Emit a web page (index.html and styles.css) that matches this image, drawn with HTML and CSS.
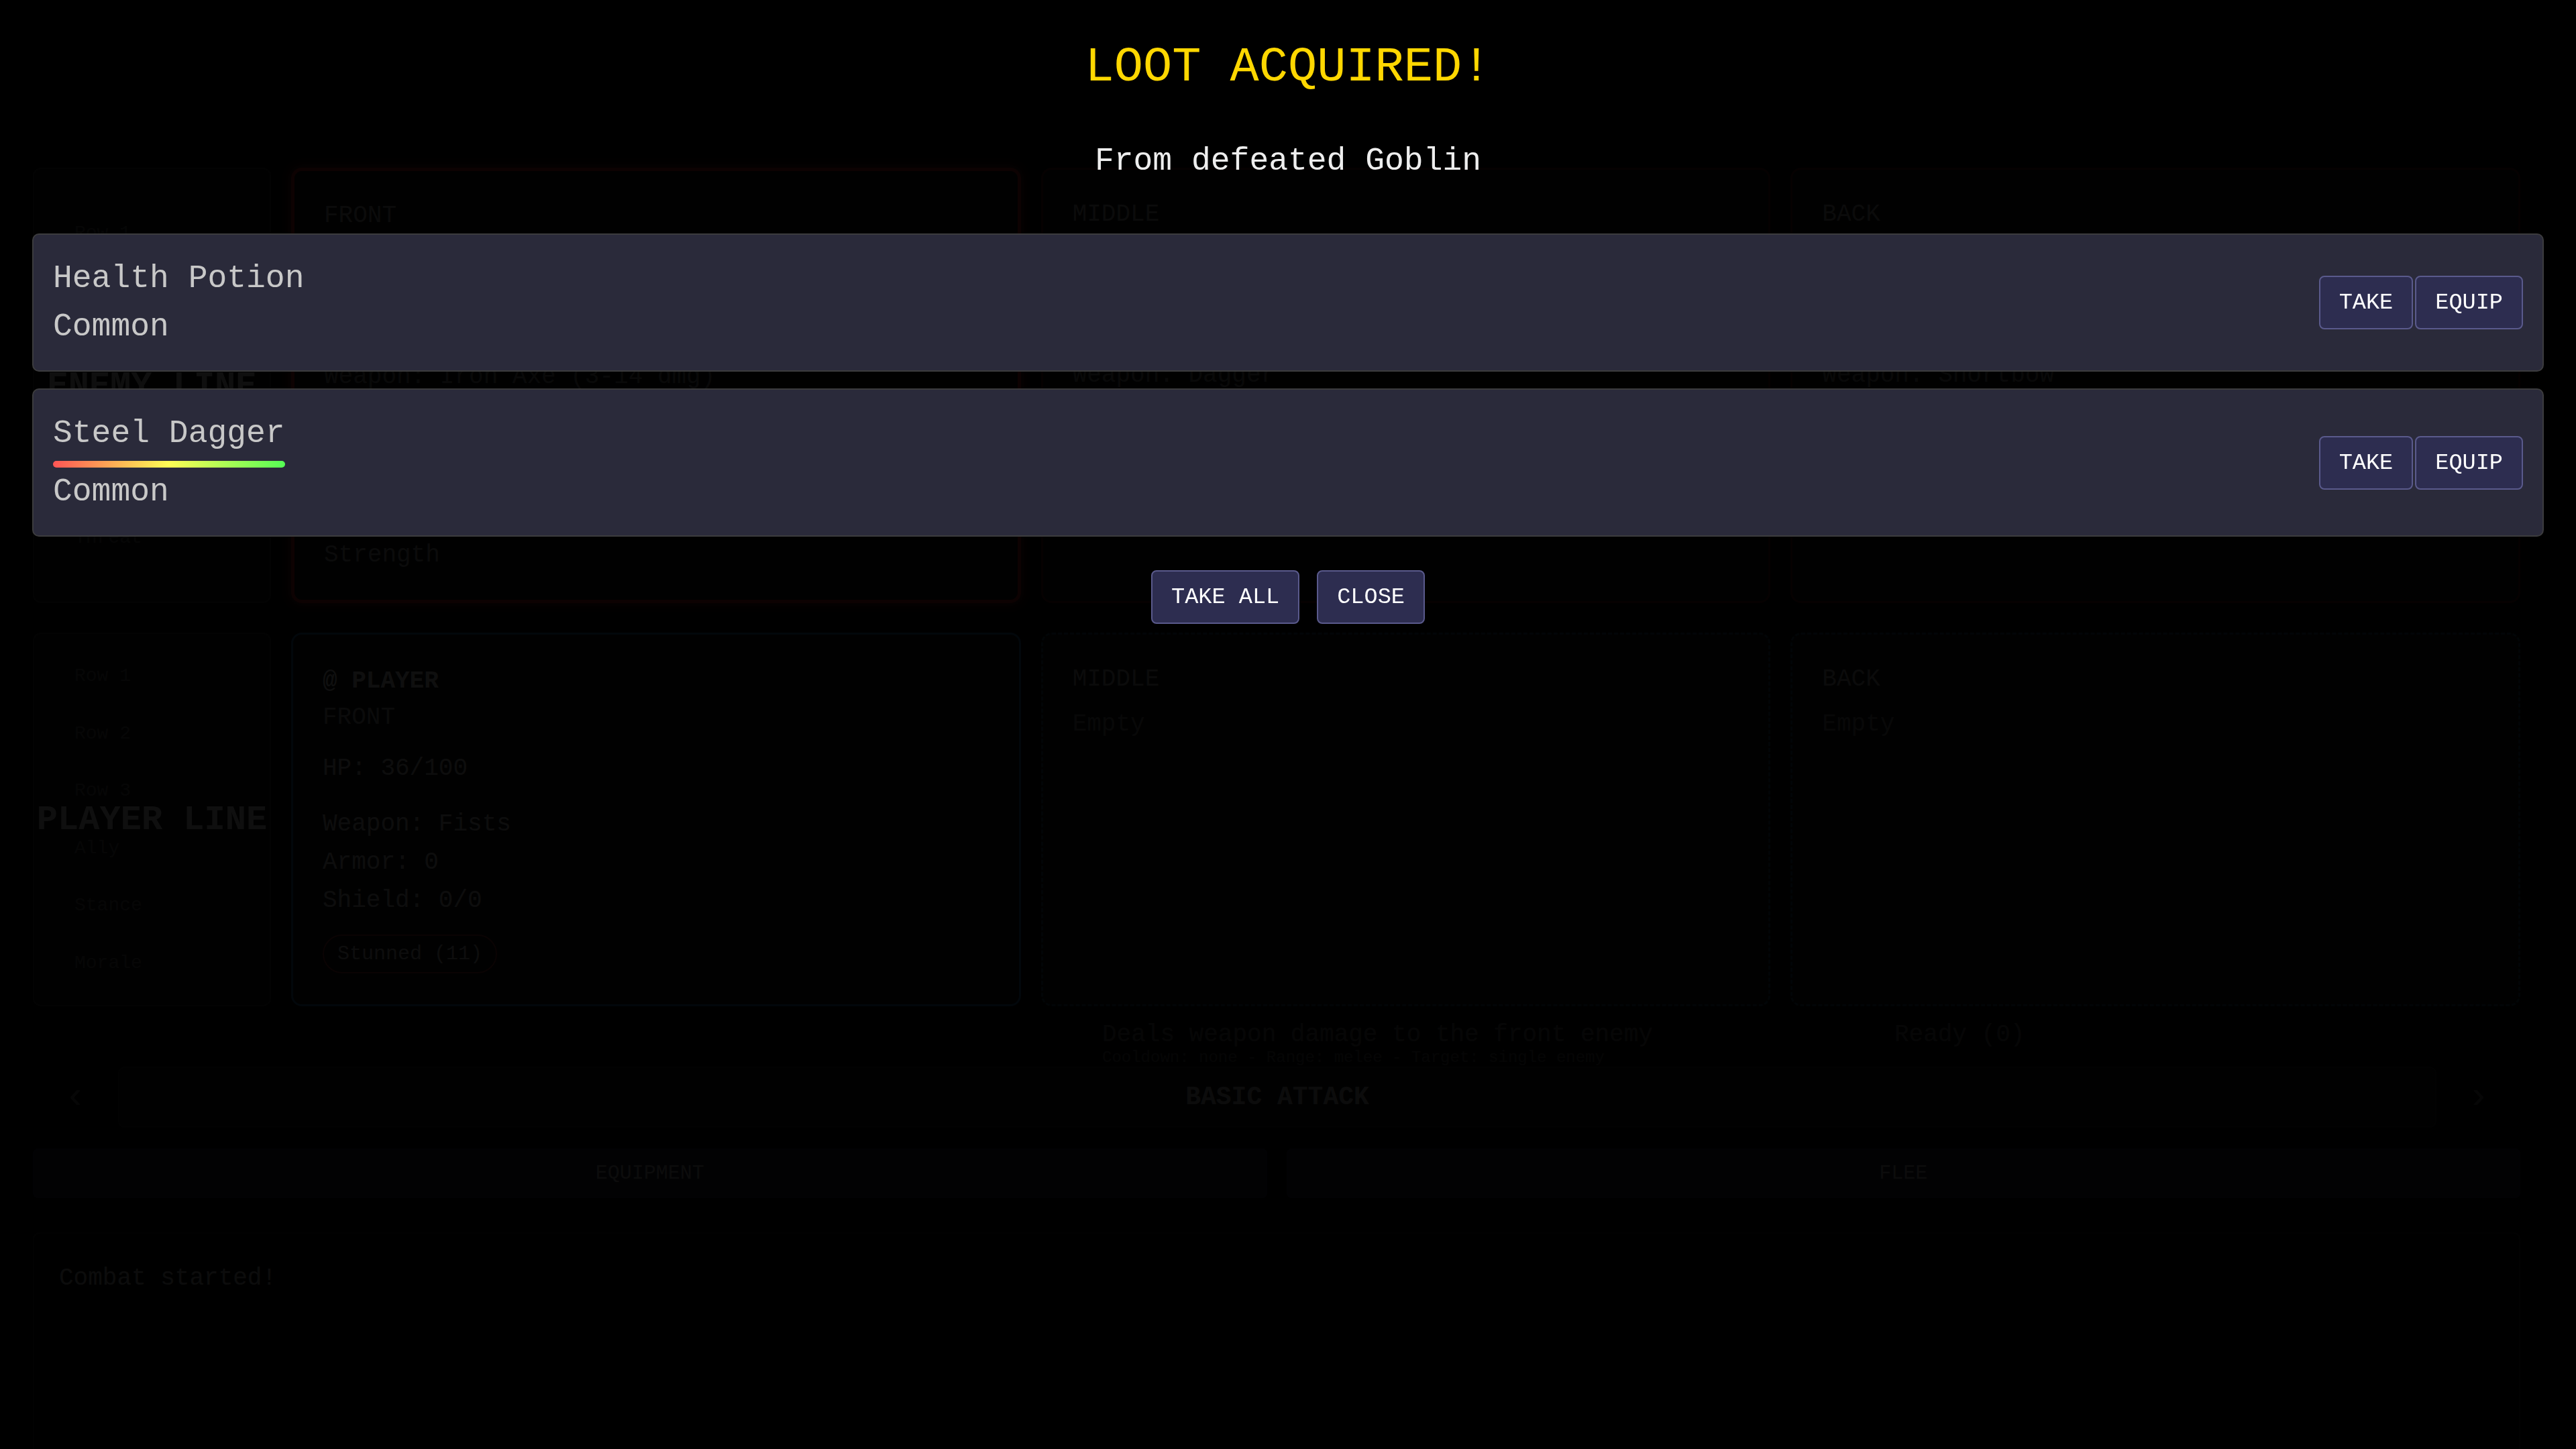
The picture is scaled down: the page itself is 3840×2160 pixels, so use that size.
FILE: index.html
```html
<!DOCTYPE html>
<html lang="en">
<head>
    <meta charset="UTF-8">
    <meta name="viewport" content="width=device-width, initial-scale=1.0">
    <title>Dungeon Crawl - Combat</title>
    <link rel="stylesheet" href="styles.css">
</head>
<body>
    <div class="battle">
        <!-- enemy formation -->
        <div class="formation enemy">
            <div class="line-label">
                <span class="hint">Row 1</span>
                <span class="hint">Threat</span>
                <h3>ENEMY LINE</h3>
            </div>
            <div class="slot enemy-slot targeted">
                <div class="slot-pos">FRONT</div>
                <div class="slot-name">Goblin</div>
                <div class="slot-hp">HP: 0/30</div>
                <div class="slot-weapon">Weapon: Iron Axe (3-14 dmg)</div>
                <div class="slot-line">Armor: 1</div>
                <div class="slot-trait">Strength</div>
            </div>
            <div class="slot enemy-slot">
                <div class="slot-pos">MIDDLE</div>
                <div class="slot-name">Cultist</div>
                <div class="slot-hp">HP: 24/24</div>
                <div class="slot-weapon">Weapon: Dagger</div>
            </div>
            <div class="slot enemy-slot">
                <div class="slot-pos">BACK</div>
                <div class="slot-name">Archer</div>
                <div class="slot-hp">HP: 18/18</div>
                <div class="slot-weapon">Weapon: Shortbow</div>
            </div>
        </div>

        <!-- player formation -->
        <div class="formation player">
            <div class="line-label">
                <span class="hint">Row 1</span>
                <span class="hint">Row 2</span>
                <span class="hint">Row 3</span>
                <span class="hint">Ally</span>
                <span class="hint">Stance</span>
                <span class="hint">Morale</span>
                <h3>PLAYER LINE</h3>
            </div>
            <div class="slot player-slot">
                <div class="slot-name">@ PLAYER</div>
                <div class="slot-pos small-gap">FRONT</div>
                <div class="slot-hp">HP: 36/100</div>
                <div class="slot-stats">
                    <div>Weapon: Fists</div>
                    <div>Armor: 0</div>
                    <div>Shield: 0/0</div>
                </div>
                <span class="status">Stunned (11)</span>
            </div>
            <div class="slot empty-slot">
                <div class="slot-pos">MIDDLE</div>
                <div class="slot-empty">Empty</div>
            </div>
            <div class="slot empty-slot">
                <div class="slot-pos">BACK</div>
                <div class="slot-empty">Empty</div>
            </div>
        </div>

        <div class="skill-preview">
            <div class="skill-meta">
                <span>Deals weapon damage to the front enemy</span>
                <span>Ready (0)</span>
            </div>
            <div class="skill-note">Cooldown: none - Range: melee - Target: single enemy</div>
        </div>

        <div class="skill-carousel">
            <span class="arrow">&lsaquo;</span>
            <div class="skill-card">BASIC ATTACK</div>
            <span class="arrow">&rsaquo;</span>
        </div>

        <div class="menu-buttons">
            <button class="menu-btn">EQUIPMENT</button>
            <button class="menu-btn">FLEE</button>
        </div>

        <div class="combat-log">
            <p>Combat started!</p>
        </div>
    </div>

    <!-- loot popup -->
    <div class="loot-overlay">
        <h2 class="loot-title">LOOT ACQUIRED!</h2>
        <p class="loot-source">From defeated Goblin</p>

        <div class="loot-list">
            <div class="loot-item">
                <div class="loot-info">
                    <div class="loot-name">Health Potion</div>
                    <div class="loot-rarity">Common</div>
                </div>
                <div class="loot-buttons">
                    <button class="btn">TAKE</button>
                    <button class="btn">EQUIP</button>
                </div>
            </div>
            <div class="loot-item">
                <div class="loot-info">
                    <div class="loot-name">Steel Dagger</div>
                    <div class="durability"></div>
                    <div class="loot-rarity">Common</div>
                </div>
                <div class="loot-buttons">
                    <button class="btn">TAKE</button>
                    <button class="btn">EQUIP</button>
                </div>
            </div>
        </div>

        <div class="loot-actions">
            <button class="btn">TAKE ALL</button>
            <button class="btn">CLOSE</button>
        </div>
    </div>
</body>
</html>
```

FILE: styles.css
```css
* {
    margin: 0;
    padding: 0;
    box-sizing: border-box;
}

body {
    font-family: "Courier New", Courier, "Nimbus Mono PS", "Nimbus Mono L", FreeMono, "Liberation Mono", monospace;
    font-size: 36px;
    background: #0a0a0a;
    color: #aaa;
    height: 100vh;
    overflow: hidden;
}

button {
    font-family: inherit;
}

/* ---------- battle screen ---------- */

.battle {
    padding: 250px 83px 0 49px;
}

.formation {
    display: grid;
    grid-template-columns: 355px repeat(3, 1fr);
    gap: 30px;
}

.formation.enemy {
    height: 649px;
}

.formation.player {
    height: 551px;
    margin-top: 44px;
}

.line-label {
    position: relative;
    display: flex;
    flex-direction: column;
    justify-content: space-around;
    padding: 20px 60px;
    border: 2px solid #2a2a2a;
    border-radius: 12px;
    background: #0e0e0e;
}

.formation.enemy .line-label {
    justify-content: space-between;
    padding: 80px 60px;
}

.hint {
    font-size: 28px;
    color: #555;
}

.line-label h3 {
    position: absolute;
    left: 0;
    right: 0;
    top: 50%;
    transform: translateY(-50%);
    text-align: center;
    font-size: 52px;
    font-weight: bold;
    color: #bbb;
}

.slot {
    display: flex;
    flex-direction: column;
    align-items: flex-start;
    padding: 46px 44px;
    border-radius: 16px;
    background: #0e0e0e;
}

.enemy-slot {
    border: 3px solid #4a1414;
}

.enemy-slot.targeted {
    border: 5px solid #a01c1c;
    box-shadow: 0 0 16px rgba(255, 40, 40, 0.5);
}

.player-slot {
    border: 3px solid #1e5a8a;
    padding-top: 49px;
}

.empty-slot {
    border: 3px dashed #1a4258;
}

.slot-pos {
    color: #888;
}

.slot-pos.small-gap {
    margin-top: 13px;
}

.slot-name {
    font-weight: bold;
    color: #bbb;
}

.enemy-slot .slot-name {
    margin-top: 13px;
}

.slot-hp {
    margin-top: 35px;
}

.slot-weapon {
    margin-top: 69px;
    color: #777;
}

.slot-line {
    margin-top: 16px;
}

.slot-trait {
    margin-top: auto;
    color: #888;
}

.slot-stats {
    display: flex;
    flex-direction: column;
    gap: 16px;
    margin-top: 42px;
}

.slot-empty {
    margin-top: 26px;
    color: #666;
}

.status {
    margin-top: 30px;
    padding: 10px 20px;
    border: 2px solid #802828;
    border-radius: 30px;
    font-size: 30px;
}

.skill-preview {
    margin: 28px 0 0 1594px;
    color: #555;
}

.skill-meta {
    display: flex;
    gap: 360px;
}

.skill-note {
    font-size: 24px;
    color: #444;
}

.skill-carousel {
    display: grid;
    grid-template-columns: 127px 1fr 125px;
    align-items: center;
    height: 91px;
}

.arrow {
    text-align: center;
    font-size: 56px;
    color: #555;
}

.skill-card {
    height: 100%;
    display: flex;
    align-items: center;
    justify-content: center;
    border: 2px solid #222;
    border-radius: 10px;
    background: #101010;
    font-size: 38px;
    font-weight: bold;
    color: #999;
}

.menu-buttons {
    display: grid;
    grid-template-columns: 1fr 1fr;
    gap: 29px;
    margin-top: 31px;
}

.menu-btn {
    height: 74px;
    background: #1a1a2e;
    border: 2px solid #24243a;
    border-radius: 8px;
    color: #999;
    font-size: 30px;
}

.combat-log {
    height: 420px;
    margin-top: 51px;
    padding: 46px 37px;
    border: 2px solid #222;
    border-radius: 10px;
    background: #0c0c0c;
    color: #999;
}

/* ---------- loot popup ---------- */

.loot-overlay {
    position: fixed;
    inset: 0;
    display: flex;
    flex-direction: column;
    align-items: center;
    padding: 60px 48px;
    background: rgba(0, 0, 0, 0.92);
}

.loot-title {
    font-size: 72px;
    font-weight: normal;
    color: #ffd700;
}

.loot-source {
    margin-top: 71px;
    font-size: 48px;
    color: #eee;
}

.loot-list {
    width: 100%;
    margin-top: 81px;
    display: flex;
    flex-direction: column;
    gap: 25px;
}

.loot-item {
    display: flex;
    align-items: center;
    justify-content: space-between;
    padding: 38px 29px;
    background: #2a2a3a;
    border: 2px solid #3c3c3e;
    border-radius: 10px;
    font-size: 48px;
    color: #c8c8c8;
}

.loot-info {
    display: inline-flex;
    flex-direction: column;
}

.loot-rarity {
    margin-top: 18px;
}

.durability {
    height: 10px;
    margin-top: 14px;
    border-radius: 5px;
    background: linear-gradient(90deg, #ff5555, #ffff55, #55ff55);
}

.durability + .loot-rarity {
    margin-top: 9px;
}

.loot-buttons {
    display: flex;
    gap: 3px;
}

.btn {
    padding: 19px 28px;
    background: #2d2d50;
    border: 2px solid #5a5a8c;
    border-radius: 8px;
    color: #fff;
    font-size: 33.6px;
    cursor: pointer;
}

.btn:hover {
    background: #3a3a66;
}

.loot-actions {
    display: flex;
    gap: 26px;
    margin-top: 50px;
}
```
